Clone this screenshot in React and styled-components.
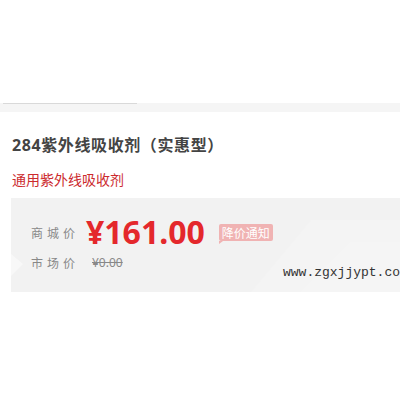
import React from "react";
import styled, { createGlobalStyle } from "styled-components";

const GlobalStyle = createGlobalStyle`
  body {
    margin: 0;
    background: #fff;
    font-family: "Noto Sans", "Noto Sans CJK SC", sans-serif;
  }
`;

export default function App() {
  return (
    <>
      <GlobalStyle />
      <Page>
        <TabStrip>
          <TabLine />
        </TabStrip>
        <Title>284紫外线吸收剂（实惠型）</Title>
        <SubTitle>通用紫外线吸收剂</SubTitle>
        <PricePanel>
          <Decor viewBox="0 0 389 94" preserveAspectRatio="none">
            <polygon points="0,56 12,66 0,78" fill="#f8f8f8" />
            <polygon points="240,94 300,22 389,22 389,94" fill="#f4f4f4" />
            <polygon points="290,94 340,44 389,44 389,94" fill="#f5f5f5" />
          </Decor>
          <PriceRow>
            <Label>商城价</Label>
            <Price>¥161.00</Price>
            <Badge>降价通知</Badge>
          </PriceRow>
          <PriceRow small>
            <Label>市场价</Label>
            <OldPrice>¥0.00</OldPrice>
          </PriceRow>
          <Watermark>www.zgxjjypt.com</Watermark>
        </PricePanel>
      </Page>
    </>
  );
}

const Page = styled.div`
  padding-top: 103px;
  overflow: hidden;
`;

const TabStrip = styled.div`
  height: 9px;
  background: #f5f5f5;
`;

const TabLine = styled.div`
  width: 134px;
  margin-left: 3px;
  border-top: 1px solid #d9d9d9;
`;

const Title = styled.h1`
  margin: 22px 0 0 12px;
  font-size: 16px;
  line-height: 22px;
  font-weight: 700;
  letter-spacing: 0.6px;
  color: #444;
  white-space: nowrap;
`;

const SubTitle = styled.p`
  margin: 14px 0 0 12px;
  font-size: 14px;
  line-height: 20px;
  color: #cc2a2e;
`;

const PricePanel = styled.div`
  position: relative;
  margin: 8px 0 0 11px;
  height: 94px;
  padding: 16px 0 0 20px;
  box-sizing: border-box;
  background: #f2f2f2;
`;

const Decor = styled.svg`
  position: absolute;
  inset: 0;
  width: 100%;
  height: 100%;
`;

const PriceRow = styled.div`
  position: relative;
  display: flex;
  align-items: center;
  height: ${(p) => (p.small ? "24px" : "36px")};
`;

const Label = styled.span`
  width: 55px;
  font-size: 12px;
  letter-spacing: 4px;
  color: #888;
  font-family: "Noto Sans CJK SC", sans-serif;
`;

const Price = styled.span`
  font-size: 32px;
  line-height: 36px;
  font-weight: 700;
  color: #e4282c;
  font-family: "Noto Sans", "Noto Sans CJK SC", sans-serif;
`;

const Badge = styled.span`
  position: relative;
  margin-left: 14px;
  width: 54px;
  height: 17px;
  line-height: 17px;
  text-align: center;
  border-radius: 2px;
  background: #f0b3b3;
  color: #fff;
  font-size: 12px;
  font-family: "Noto Sans CJK SC", sans-serif;
  &::after {
    content: "";
    position: absolute;
    left: 0;
    bottom: -3px;
    border-top: 3px solid #f0b3b3;
    border-right: 4px solid transparent;
  }
`;

const OldPrice = styled.span`
  margin-left: 6px;
  font-size: 12px;
  color: #888;
  text-decoration: line-through;
  font-family: "Noto Sans", sans-serif;
`;

const Watermark = styled.span`
  position: absolute;
  left: 272px;
  top: 67px;
  font-family: "Liberation Mono", monospace;
  font-size: 13px;
  color: #333;
  white-space: nowrap;
`;
